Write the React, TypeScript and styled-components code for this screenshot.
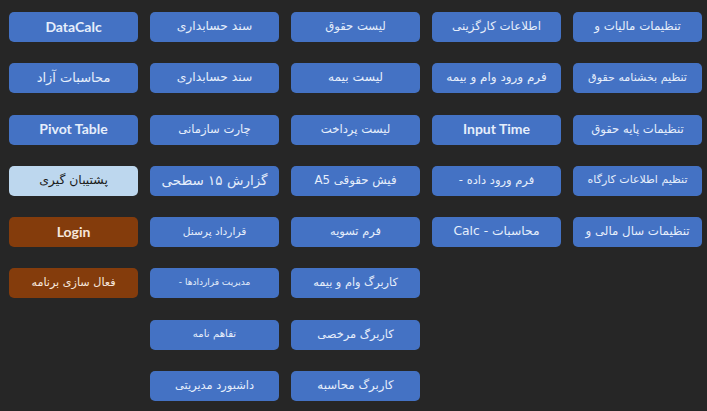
import React from "react";
import styled, { createGlobalStyle } from "styled-components";

type Tone = "blue" | "light" | "brown";

type Item = {
  label: string;
  tone?: Tone;
  size?: number;
  bold?: boolean;
};

const tones: Record<Tone, { bg: string; fg: string }> = {
  blue: { bg: "#4472c4", fg: "#e6eefb" },
  light: { bg: "#bdd7ee", fg: "#1b1b1b" },
  brown: { bg: "#843c0c", fg: "#f6e7dc" },
};

// columns listed from right to left, like the form lays them out
const columns: Item[][] = [
  [
    { label: "تنظیمات مالیات و", size: 11.8 },
    { label: "تنظیم بخشنامه حقوق", size: 11.1 },
    { label: "تنظیمات پایه حقوق", size: 11.6 },
    { label: "تنظیم اطلاعات کارگاه", size: 11 },
    { label: "تنظیمات سال مالی و", size: 11.8 },
  ],
  [
    { label: "اطلاعات کارگزینی", size: 11.8 },
    { label: "فرم ورود وام و بیمه", size: 12 },
    { label: "Input Time", bold: true, size: 14 },
    { label: "فرم ورود داده -", size: 11.5 },
    { label: "محاسبات -  Calc", size: 12.3 },
  ],
  [
    { label: "لیست حقوق", size: 11.6 },
    { label: "لیست بیمه", size: 12.3 },
    { label: "لیست پرداخت", size: 11.7 },
    { label: "فیش حقوقی A5", size: 11.8 },
    { label: "فرم تسویه", size: 11.4 },
    { label: "کاربرگ وام و بیمه", size: 11.3 },
    { label: "کاربرگ مرخصی", size: 11.4 },
    { label: "کاربرگ محاسبه", size: 11.8 },
  ],
  [
    { label: "سند حسابداری", size: 12.3 },
    { label: "سند حسابداری", size: 12.3 },
    { label: "چارت سازمانی", size: 11.6 },
    { label: "گزارش ۱۵ سطحی", size: 13.5 },
    { label: "قرارداد پرسنل", size: 10.6 },
    { label: "مدیریت قراردادها -", size: 9 },
    { label: "تفاهم نامه", size: 10.2 },
    { label: "داشبورد مدیریتی", size: 11.4 },
  ],
  [
    { label: "DataCalc", bold: true, size: 14 },
    { label: "محاسبات آزاد", size: 13 },
    { label: "Pivot Table", bold: true, size: 14 },
    { label: "پشتیبان گیری", tone: "light", size: 12.4 },
    { label: "Login", tone: "brown", bold: true, size: 14 },
    { label: "فعال سازی برنامه", tone: "brown", size: 11.2 },
  ],
];

const GlobalStyle = createGlobalStyle`
  html, body {
    margin: 0;
    padding: 0;
    background: #262626;
  }
  body {
    font-family: "Open Sans", "DejaVu Sans", sans-serif;
  }
`;

const Board = styled.div`
  direction: rtl;
  display: flex;
  align-items: flex-start;
  gap: 12px;
  height: 411px;
  box-sizing: border-box;
  padding: 12px 5px 0 0;
  overflow: hidden;
`;

const Column = styled.div`
  display: flex;
  flex-direction: column;
  gap: 21.3px;
  width: 129px;
`;

const MenuButton = styled.button<{ $tone: Tone; $size: number; $bold: boolean }>`
  direction: rtl;
  height: 30px;
  width: 100%;
  border: none;
  border-radius: 5px;
  padding: 0 4px 2px;
  background: ${(p) => tones[p.$tone].bg};
  color: ${(p) => tones[p.$tone].fg};
  font-family: ${(p) =>
    p.$bold ? `"Lato", "DejaVu Sans", sans-serif` : `"DejaVu Sans", sans-serif`};
  font-size: ${(p) => p.$size}px;
  font-weight: ${(p) => (p.$bold ? 700 : 400)};
  white-space: nowrap;
  display: flex;
  align-items: center;
  justify-content: center;
  cursor: pointer;
`;

export default function App() {
  return (
    <>
      <GlobalStyle />
      <Board>
        {columns.map((col, ci) => (
          <Column key={ci}>
            {col.map((item, i) => (
              <MenuButton
                key={i}
                $tone={item.tone ?? "blue"}
                $size={item.size ?? 12}
                $bold={!!item.bold}
              >
                {item.label}
              </MenuButton>
            ))}
          </Column>
        ))}
      </Board>
    </>
  );
}
